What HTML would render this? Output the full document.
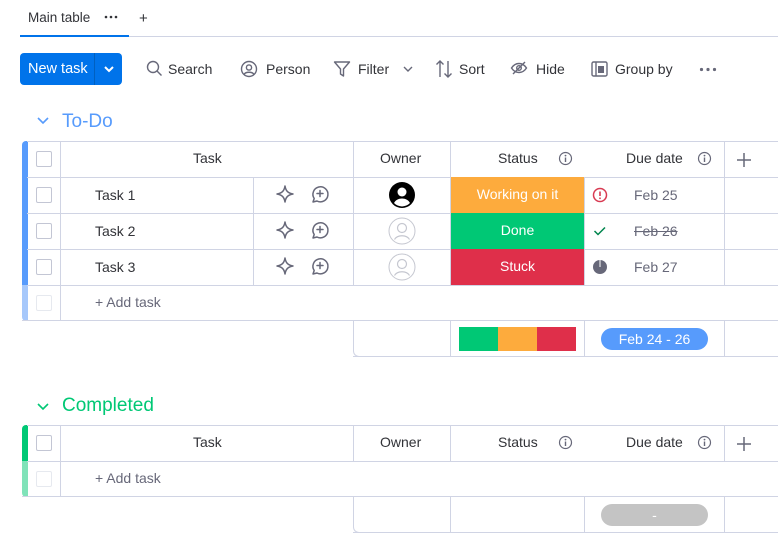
<!DOCTYPE html>
<html><head><meta charset="utf-8"><style>
*{box-sizing:border-box;margin:0;padding:0}
body{width:778px;height:556px;overflow:hidden;background:#fff;font-family:"Liberation Sans",sans-serif;color:#323338;position:relative;font-size:14px}
.a{position:absolute}
.hl{position:absolute;height:1px;background:#d0d4e4}
.vl{position:absolute;width:1px;background:#d0d4e4}
.cb{position:absolute;width:16px;height:16px;border:1px solid #c3c6d4;border-radius:2px;left:36px;background:#fff}
.t{position:absolute;font-size:14px;color:#323338;white-space:nowrap}
.st{position:absolute;left:451px;width:133px;height:35px;color:#fff;font-size:14px;text-align:center;line-height:35px}
.tb{position:absolute;top:56px;font-size:14px;color:#323338;white-space:nowrap}
</style></head><body>
<!-- tabs -->
<div class="t" style="left:28px;top:10px;font-size:13.5px">Main table</div>
<svg class="a" style="left:104px;top:15px" width="14" height="4"><circle cx="2" cy="2" r="1.3" fill="#323338"/><circle cx="7" cy="2" r="1.3" fill="#323338"/><circle cx="12" cy="2" r="1.3" fill="#323338"/></svg>
<div class="t" style="left:139px;top:10px;font-size:15px">+</div>
<div class="hl" style="left:20px;top:36px;width:758px;background:#d0d4e4"></div>
<div class="a" style="left:20px;top:35px;width:109px;height:2px;background:#0073ea"></div>
<!-- toolbar -->
<div class="a" style="left:20px;top:53px;width:102px;height:32px;background:#0073ea;border-radius:4px"></div>
<div class="a" style="left:94px;top:53px;width:1px;height:32px;background:#0060c0"></div>
<div class="t" style="left:28px;top:61px;color:#fff;font-size:14.5px">New task</div>
<svg class="a" style="left:103px;top:64px" width="12" height="10"><path d="M2 3l4 4 4-4" stroke="#fff" stroke-width="2" fill="none"/></svg>
<svg class="a" style="left:146px;top:60px" width="17" height="17"><circle cx="7" cy="7" r="5.5" stroke="#676879" stroke-width="1.4" fill="none"/><path d="M11 11l4.5 4.5" stroke="#676879" stroke-width="1.4"/></svg>
<div class="tb" style="left:168px;top:61px">Search</div>
<svg class="a" style="left:240px;top:60px" width="18" height="18"><circle cx="9" cy="9" r="7.5" stroke="#676879" stroke-width="1.4" fill="none"/><circle cx="9" cy="7.5" r="2.6" stroke="#676879" stroke-width="1.4" fill="none"/><path d="M4 14.5c1.5-3 8.5-3 10 0" stroke="#676879" stroke-width="1.4" fill="none"/></svg>
<div class="tb" style="left:266px;top:61px">Person</div>
<svg class="a" style="left:333px;top:60px" width="18" height="18"><path d="M1.5 2h15l-6 7v7l-3-2v-5z" stroke="#676879" stroke-width="1.4" fill="none" stroke-linejoin="round"/></svg>
<div class="tb" style="left:358px;top:61px">Filter</div>
<svg class="a" style="left:402px;top:65px" width="12" height="8"><path d="M2 2l4 4 4-4" stroke="#676879" stroke-width="1.4" fill="none"/></svg>
<svg class="a" style="left:435px;top:59px" width="18" height="20"><path d="M5 18V2M1.5 5.5L5 2l3.5 3.5M13 2v16M9.5 14.5L13 18l3.5-3.5" stroke="#676879" stroke-width="1.4" fill="none"/></svg>
<div class="tb" style="left:459px;top:61px">Sort</div>
<svg class="a" style="left:510px;top:61px" width="18" height="14"><path d="M1.5 7c4-6 11-6 15 0-4 6-11 6-15 0z" stroke="#676879" stroke-width="1.4" fill="none"/><circle cx="9" cy="7" r="2.3" stroke="#676879" stroke-width="1.4" fill="none"/><path d="M3 13L15 1" stroke="#676879" stroke-width="1.4"/></svg>
<div class="tb" style="left:536px;top:61px">Hide</div>
<svg class="a" style="left:591px;top:61px" width="17" height="16"><rect x="1" y="1" width="15" height="14" rx="1.5" stroke="#676879" stroke-width="1.4" fill="none"/><path d="M5 1v14" stroke="#676879" stroke-width="1.4"/><rect x="7" y="5" width="6" height="7" fill="#676879"/></svg>
<div class="tb" style="left:615px;top:61px">Group by</div>
<svg class="a" style="left:699px;top:67px" width="18" height="5"><circle cx="2.5" cy="2.5" r="1.6" fill="#676879"/><circle cx="9" cy="2.5" r="1.6" fill="#676879"/><circle cx="15.5" cy="2.5" r="1.6" fill="#676879"/></svg>

<!-- To-Do group -->
<svg class="a" style="left:36px;top:116px" width="14" height="10"><path d="M2 2l5 5 5-5" stroke="#579bfc" stroke-width="1.6" fill="none"/></svg>
<div class="t" style="left:62px;top:111px;font-size:19px;color:#579bfc;font-weight:500">To-Do</div>
<div class="a" style="left:22px;top:141px;width:6px;height:144px;background:#579bfc;border-radius:4px 0 0 0"></div>
<div class="a" style="left:22px;top:285px;width:6px;height:36px;background:#a6c8fb;border-radius:0 0 0 4px"></div>
<div class="hl" style="left:27px;top:141px;width:751px"></div>
<div class="hl" style="left:27px;top:177px;width:751px"></div>
<div class="hl" style="left:27px;top:213px;width:751px"></div>
<div class="hl" style="left:27px;top:249px;width:751px"></div>
<div class="hl" style="left:27px;top:285px;width:751px"></div>
<div class="hl" style="left:22px;top:320px;width:756px"></div>
<div class="hl" style="left:353px;top:356px;width:425px"></div>
<div class="vl" style="left:60px;top:141px;height:180px"></div>
<div class="vl" style="left:253px;top:177px;height:108px"></div>
<div class="vl" style="left:353px;top:141px;height:144px"></div>
<div class="vl" style="left:450px;top:141px;height:144px"></div>
<div class="vl" style="left:584px;top:177px;height:108px"></div>
<div class="vl" style="left:724px;top:141px;height:144px"></div>
<div class="vl" style="left:353px;top:321px;height:30px"></div>
<div class="a" style="left:353px;top:340px;width:12px;height:17px;border-left:1px solid #d0d4e4;border-bottom:1px solid #d0d4e4;border-radius:0 0 0 6px"></div>
<div class="vl" style="left:450px;top:321px;height:36px"></div>
<div class="vl" style="left:584px;top:321px;height:36px"></div>
<div class="vl" style="left:724px;top:321px;height:36px"></div>
<div class="cb" style="top:151px"></div>
<div class="cb" style="top:187px"></div>
<div class="cb" style="top:223px"></div>
<div class="cb" style="top:259px"></div>
<div class="cb" style="top:295px;border-color:#e6e9ef"></div>
<div class="t" style="left:193px;top:150px">Task</div>
<div class="t" style="left:380px;top:150px">Owner</div>
<div class="t" style="left:498px;top:150px">Status</div>
<div class="t" style="left:626px;top:150px">Due date</div>
<svg class="a" style="left:558px;top:151px" width="15" height="15"><circle cx="7.5" cy="7.5" r="6" stroke="#676879" stroke-width="1.2" fill="none"/><path d="M7.5 6.5v4.5" stroke="#676879" stroke-width="1.4"/><circle cx="7.5" cy="4.6" r=".9" fill="#676879"/></svg>
<svg class="a" style="left:697px;top:151px" width="15" height="15"><circle cx="7.5" cy="7.5" r="6" stroke="#676879" stroke-width="1.2" fill="none"/><path d="M7.5 6.5v4.5" stroke="#676879" stroke-width="1.4"/><circle cx="7.5" cy="4.6" r=".9" fill="#676879"/></svg>
<svg class="a" style="left:735px;top:151px" width="18" height="18"><path d="M9 2v14M2 9h14" stroke="#676879" stroke-width="1.5"/></svg>

<div class="t" style="left:95px;top:187px">Task 1</div>
<div class="t" style="left:95px;top:223px">Task 2</div>
<div class="t" style="left:95px;top:259px">Task 3</div>
<div class="t" style="left:95px;top:294px;color:#676879">+ Add task</div>

<!-- row icons -->
<svg class="a" style="left:274px;top:184px" width="22" height="100"><g stroke="#676879" stroke-width="1.5" fill="none" stroke-linejoin="round"><path d="M11 2c.8 5 3 7.2 8 8-5 .8-7.2 3-8 8-.8-5-3-7.2-8-8 5-.8 7.2-3 8-8z"/><path transform="translate(0,36)" d="M11 2c.8 5 3 7.2 8 8-5 .8-7.2 3-8 8-.8-5-3-7.2-8-8 5-.8 7.2-3 8-8z"/><path transform="translate(0,72)" d="M11 2c.8 5 3 7.2 8 8-5 .8-7.2 3-8 8-.8-5-3-7.2-8-8 5-.8 7.2-3 8-8z"/></g></svg>
<svg class="a" style="left:309px;top:184px" width="22" height="100"><g stroke="#676879" stroke-width="1.5" fill="none" stroke-linecap="round" stroke-linejoin="round">
<path d="M4 18l1.2-3.5A7.5 7.5 0 1 1 8 17z"/><path d="M11 6.5v6M8 9.5h6"/>
<g transform="translate(0,36)"><path d="M4 18l1.2-3.5A7.5 7.5 0 1 1 8 17z"/><path d="M11 6.5v6M8 9.5h6"/></g>
<g transform="translate(0,72)"><path d="M4 18l1.2-3.5A7.5 7.5 0 1 1 8 17z"/><path d="M11 6.5v6M8 9.5h6"/></g></g></svg>
<!-- owners -->
<svg class="a" style="left:388px;top:181px" width="28" height="28"><circle cx="14" cy="14" r="13" fill="#000"/><circle cx="14" cy="11" r="4.5" fill="#fff"/><path d="M6 22c3-6 13-6 16 0a11 11 0 0 1-16 0z" fill="#fff"/></svg>
<svg class="a" style="left:388px;top:217px" width="28" height="28"><circle cx="14" cy="14" r="13" fill="#fff" stroke="#c5c7d0"/><circle cx="14" cy="11" r="4.5" fill="none" stroke="#c5c7d0" stroke-width="1.2"/><path d="M6.5 22.5c3-5 12-5 15 0" fill="none" stroke="#c5c7d0" stroke-width="1.2"/></svg>
<svg class="a" style="left:388px;top:253px" width="28" height="28"><circle cx="14" cy="14" r="13" fill="#fff" stroke="#c5c7d0"/><circle cx="14" cy="11" r="4.5" fill="none" stroke="#c5c7d0" stroke-width="1.2"/><path d="M6.5 22.5c3-5 12-5 15 0" fill="none" stroke="#c5c7d0" stroke-width="1.2"/></svg>
<!-- statuses -->
<div class="st" style="top:177px;background:#fdab3d;height:36px">Working on it</div>
<div class="st" style="top:213px;background:#00c875;height:36px">Done</div>
<div class="st" style="top:249px;background:#df2f4a;height:36px">Stuck</div>
<!-- due -->
<svg class="a" style="left:592px;top:187px" width="16" height="16"><circle cx="8" cy="8" r="6.5" stroke="#d83a52" stroke-width="1.5" fill="none"/><path d="M8 4.5v4.5" stroke="#d83a52" stroke-width="1.6"/><circle cx="8" cy="11.3" r=".9" fill="#d83a52"/></svg>
<svg class="a" style="left:593px;top:225px" width="14" height="12"><path d="M1.5 6l3.5 3.5L12 2.5" stroke="#00854d" stroke-width="1.5" fill="none"/></svg>
<svg class="a" style="left:592px;top:259px" width="16" height="16"><circle cx="8" cy="8" r="7" fill="#676879"/><path d="M8 1v7" stroke="#fff" stroke-width="1"/></svg>
<div class="t" style="left:634px;top:187px;color:#676879">Feb 25</div>
<div class="t" style="left:634px;top:223px;color:#676879;text-decoration:line-through">Feb 26</div>
<div class="t" style="left:634px;top:259px;color:#676879">Feb 27</div>
<!-- summary -->
<div class="a" style="left:459px;top:327px;width:39px;height:24px;background:#00c875"></div>
<div class="a" style="left:498px;top:327px;width:39px;height:24px;background:#fdab3d"></div>
<div class="a" style="left:537px;top:327px;width:39px;height:24px;background:#df2f4a"></div>
<div class="a" style="left:601px;top:328px;width:107px;height:22px;background:#579bfc;border-radius:11px;color:#fff;text-align:center;line-height:22px;font-size:14px">Feb 24 - 26</div>

<!-- Completed group -->
<svg class="a" style="left:36px;top:402px" width="14" height="10"><path d="M2 2l5 5 5-5" stroke="#00c875" stroke-width="1.6" fill="none"/></svg>
<div class="t" style="left:62px;top:395px;font-size:19px;color:#00c875;font-weight:500">Completed</div>
<div class="a" style="left:22px;top:425px;width:6px;height:36px;background:#00c875;border-radius:4px 0 0 0"></div>
<div class="a" style="left:22px;top:461px;width:6px;height:36px;background:#80e3b9;border-radius:0 0 0 4px"></div>
<div class="hl" style="left:27px;top:425px;width:751px"></div>
<div class="hl" style="left:27px;top:461px;width:751px"></div>
<div class="hl" style="left:22px;top:496px;width:756px"></div>
<div class="hl" style="left:353px;top:532px;width:425px"></div>
<div class="vl" style="left:60px;top:425px;height:72px"></div>
<div class="vl" style="left:353px;top:425px;height:36px"></div>
<div class="vl" style="left:450px;top:425px;height:36px"></div>
<div class="vl" style="left:724px;top:425px;height:36px"></div>
<div class="vl" style="left:353px;top:497px;height:30px"></div>
<div class="a" style="left:353px;top:516px;width:12px;height:17px;border-left:1px solid #d0d4e4;border-bottom:1px solid #d0d4e4;border-radius:0 0 0 6px"></div>
<div class="vl" style="left:450px;top:497px;height:36px"></div>
<div class="vl" style="left:584px;top:497px;height:36px"></div>
<div class="vl" style="left:724px;top:497px;height:36px"></div>
<div class="cb" style="top:435px"></div>
<div class="cb" style="top:471px;border-color:#e6e9ef"></div>
<div class="t" style="left:193px;top:434px">Task</div>
<div class="t" style="left:380px;top:434px">Owner</div>
<div class="t" style="left:498px;top:434px">Status</div>
<div class="t" style="left:626px;top:434px">Due date</div>
<svg class="a" style="left:558px;top:435px" width="15" height="15"><circle cx="7.5" cy="7.5" r="6" stroke="#676879" stroke-width="1.2" fill="none"/><path d="M7.5 6.5v4.5" stroke="#676879" stroke-width="1.4"/><circle cx="7.5" cy="4.6" r=".9" fill="#676879"/></svg>
<svg class="a" style="left:697px;top:435px" width="15" height="15"><circle cx="7.5" cy="7.5" r="6" stroke="#676879" stroke-width="1.2" fill="none"/><path d="M7.5 6.5v4.5" stroke="#676879" stroke-width="1.4"/><circle cx="7.5" cy="4.6" r=".9" fill="#676879"/></svg>
<svg class="a" style="left:735px;top:435px" width="18" height="18"><path d="M9 2v14M2 9h14" stroke="#676879" stroke-width="1.5"/></svg>
<div class="t" style="left:95px;top:470px;color:#676879">+ Add task</div>
<div class="a" style="left:601px;top:504px;width:107px;height:22px;background:#c4c4c4;border-radius:11px;color:#fff;text-align:center;line-height:22px;font-size:14px">-</div>
</body></html>
